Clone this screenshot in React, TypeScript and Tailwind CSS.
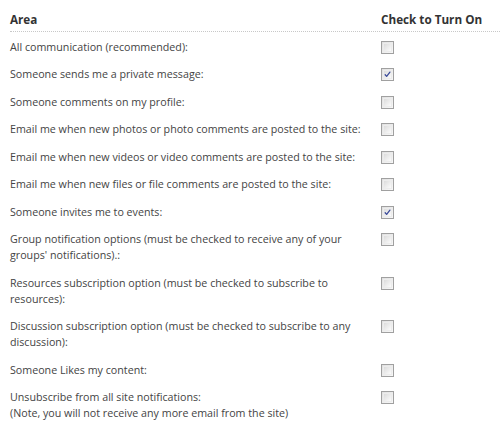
import React from "react";

const rows: { text: React.ReactNode; checked: boolean }[] = [
  { text: "All communication (recommended):", checked: false },
  { text: "Someone sends me a private message:", checked: true },
  { text: "Someone comments on my profile:", checked: false },
  { text: "Email me when new photos or photo comments are posted to the site:", checked: false },
  { text: "Email me when new videos or video comments are posted to the site:", checked: false },
  { text: "Email me when new files or file comments are posted to the site:", checked: false },
  { text: "Someone invites me to events:", checked: true },
  { text: "Group notification options (must be checked to receive any of your groups' notifications).:", checked: false },
  { text: "Resources subscription option (must be checked to subscribe to resources):", checked: false },
  { text: "Discussion subscription option (must be checked to subscribe to any discussion):", checked: false },
  { text: "Someone Likes my content:", checked: false },
  {
    text: (
      <>
        Unsubscribe from all site notifications:
        <br />
        (Note, you will not receive any more email from the site)
      </>
    ),
    checked: false,
  },
];

function Box({ checked }: { checked: boolean }) {
  return (
    <span className="mt-[2px] flex h-[13px] w-[13px] items-center justify-center border border-[#a0a0a0] bg-gradient-to-br from-[#e0e0e0] to-[#f8f8f8] p-[1px]">
      <span className="flex h-full w-full items-center justify-center border border-[#ececec] bg-gradient-to-br from-[#dcdcdc] to-[#fbfbfb]">
        {checked && (
          <svg width="9" height="9" viewBox="0 0 9 9">
            <path d="M1.5 4.8 L3.4 7 L7.6 1.4" fill="none" stroke="#3a4a9a" strokeWidth="1.6" strokeLinecap="round" strokeLinejoin="round" />
          </svg>
        )}
      </span>
    </span>
  );
}

export default function App() {
  return (
    <div className="w-[500px] bg-white pl-[10px] pt-[11px] text-[10.7px] leading-[16px] text-[#444]" style={{ fontFamily: '"Open Sans", "DejaVu Sans", sans-serif' }}>
      <div className="grid grid-cols-[371px_1fr] border-b border-dotted border-[#c8c8c8] pb-[4px] text-[11.7px] font-bold text-[#333]">
        <div>Area</div>
        <div>Check to Turn On</div>
      </div>
      <div className="pt-[1px]">
        {rows.map((r, i) => (
          <div key={i} className="grid grid-cols-[371px_1fr] py-[5.75px]">
            <div className="pr-[6px]">{r.text}</div>
            <div>
              <Box checked={r.checked} />
            </div>
          </div>
        ))}
      </div>
    </div>
  );
}
